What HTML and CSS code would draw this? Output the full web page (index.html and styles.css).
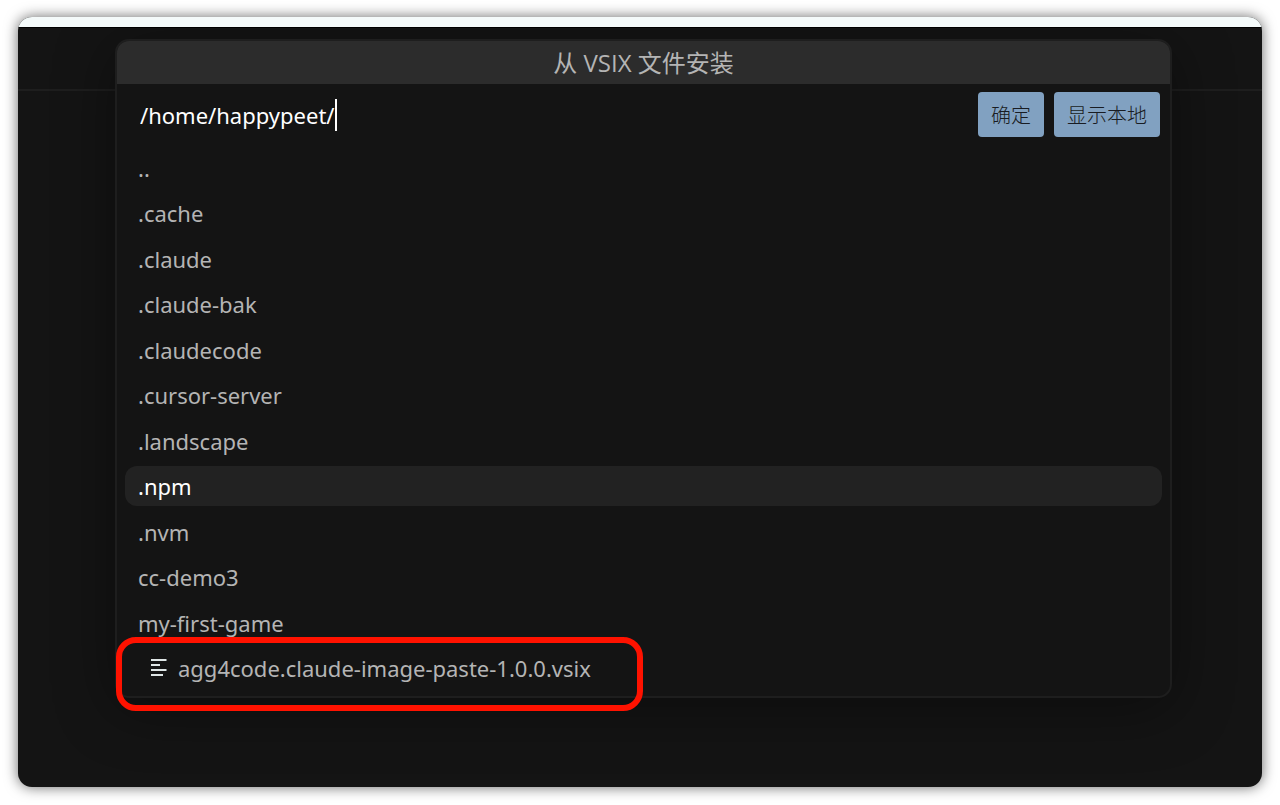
FILE: index.html
```
<!DOCTYPE html>
<html lang="zh-CN">
<head>
    <meta charset="UTF-8">
    <meta name="viewport" content="width=device-width, initial-scale=1.0">
    <title>从 VSIX 文件安装</title>
    <link rel="stylesheet" href="styles.css">
</head>
<body>
    <div class="window">
        <div class="strip"></div>
        <div class="toolbar"></div>
        <div class="dialog" role="dialog" aria-labelledby="dialogTitle">
            <h1 id="dialogTitle">从 VSIX 文件安装</h1>
            <form class="path-row">
                <div class="path">
                    <input type="text" id="pathInput" aria-label="从 VSIX 文件安装" value="/home/happypeet/" spellcheck="false">
                    <span class="caret"></span>
                </div>
                <button type="button">确定</button>
                <button type="button">显示本地</button>
            </form>
            <ul class="files" role="listbox" aria-labelledby="dialogTitle">
                <li role="option">..</li>
                <li role="option">.cache</li>
                <li role="option">.claude</li>
                <li role="option">.claude-bak</li>
                <li role="option">.claudecode</li>
                <li role="option">.cursor-server</li>
                <li role="option">.landscape</li>
                <li role="option" class="selected" aria-selected="true">.npm</li>
                <li role="option">.nvm</li>
                <li role="option">cc-demo3</li>
                <li role="option">my-first-game</li>
                <li role="option" class="file">
                    <svg width="16" height="18" viewBox="0 0 16 18" aria-hidden="true">
                        <path d="M0 1h15.5M0 6h9M0 11h15.5M0 16h12" stroke="#dfe6e6" stroke-width="2"/>
                    </svg>
                    agg4code.claude-image-paste-1.0.0.vsix
                    <span class="marker"></span>
                </li>
            </ul>
        </div>
    </div>
</body>
</html>
```

FILE: styles.css
```
* {
    box-sizing: border-box;
}
body {
    margin: 0;
    min-height: 100vh;
    padding: 17px 18px 18px;
    display: flex;
    background: #fff;
    color: #b4b4b4;
    font-family: "Noto Sans", "Noto Sans CJK SC", sans-serif;
    font-size: 22px;
}
.window {
    position: relative;
    flex: 1;
    overflow: hidden;
    background: #141414;
    border-radius: 14px;
    box-shadow: 0 0 14px rgba(0, 0, 0, 0.6);
}
.strip {
    position: relative;
    z-index: 1;
    height: 11px;
    background: #f4fafa;
    border-bottom: 1px solid #000;
}
.toolbar {
    height: 63px;
    border-bottom: 2px solid #1e1e1e;
}

/* Dialog floats over the editor window */
.dialog {
    position: absolute;
    top: 22px;
    right: 90px;
    bottom: 89px;
    left: 97px;
    display: flex;
    flex-direction: column;
    background: #141414;
    border: 2px solid #1e1e1e;
    border-radius: 14px;
    box-shadow: 0 10px 60px rgba(0, 0, 0, 0.4);
}
h1 {
    margin: 0;
    height: 43px;
    line-height: 43px;
    text-align: center;
    font-family: "Open Sans", "Noto Sans CJK SC", sans-serif;
    font-size: 24px;
    font-weight: normal;
    background: #2c2c2c;
    border-radius: 12px 12px 0 0;
}
.path-row {
    display: flex;
    align-items: center;
    gap: 10px;
    padding: 8px 10px 11px 23px;
}
.path {
    flex: 1;
    display: flex;
    align-items: center;
}
.path input {
    field-sizing: content;
    padding: 0;
    border: none;
    outline: none;
    background: none;
    color: #fff;
    font: inherit;
}
.caret {
    width: 2px;
    height: 32px;
    background: #fff;
}
button {
    height: 45px;
    padding: 0 13px;
    border: none;
    border-radius: 4px;
    background: #81a1c1;
    color: #191c22;
    font-family: "Noto Sans CJK SC", sans-serif;
    font-size: 20px;
    font-weight: 300;
    cursor: pointer;
}
.files {
    flex: 1;
    display: flex;
    flex-direction: column;
    justify-content: space-between;
    margin: 0;
    padding: 0 8px 8px;
    list-style: none;
}
.files li {
    height: 40px;
    line-height: 40px;
    padding: 0 13px;
    border-radius: 12px;
}
.files .selected {
    background: #222;
    color: #fff;
}
.files .file {
    position: relative;
    display: flex;
    align-items: center;
    gap: 11px;
    padding-left: 26px;
}
.marker {
    position: absolute;
    top: -11px;
    left: -9px;
    width: 527px;
    height: 74px;
    border: 6px solid #ff1200;
    border-radius: 20px;
}
```
